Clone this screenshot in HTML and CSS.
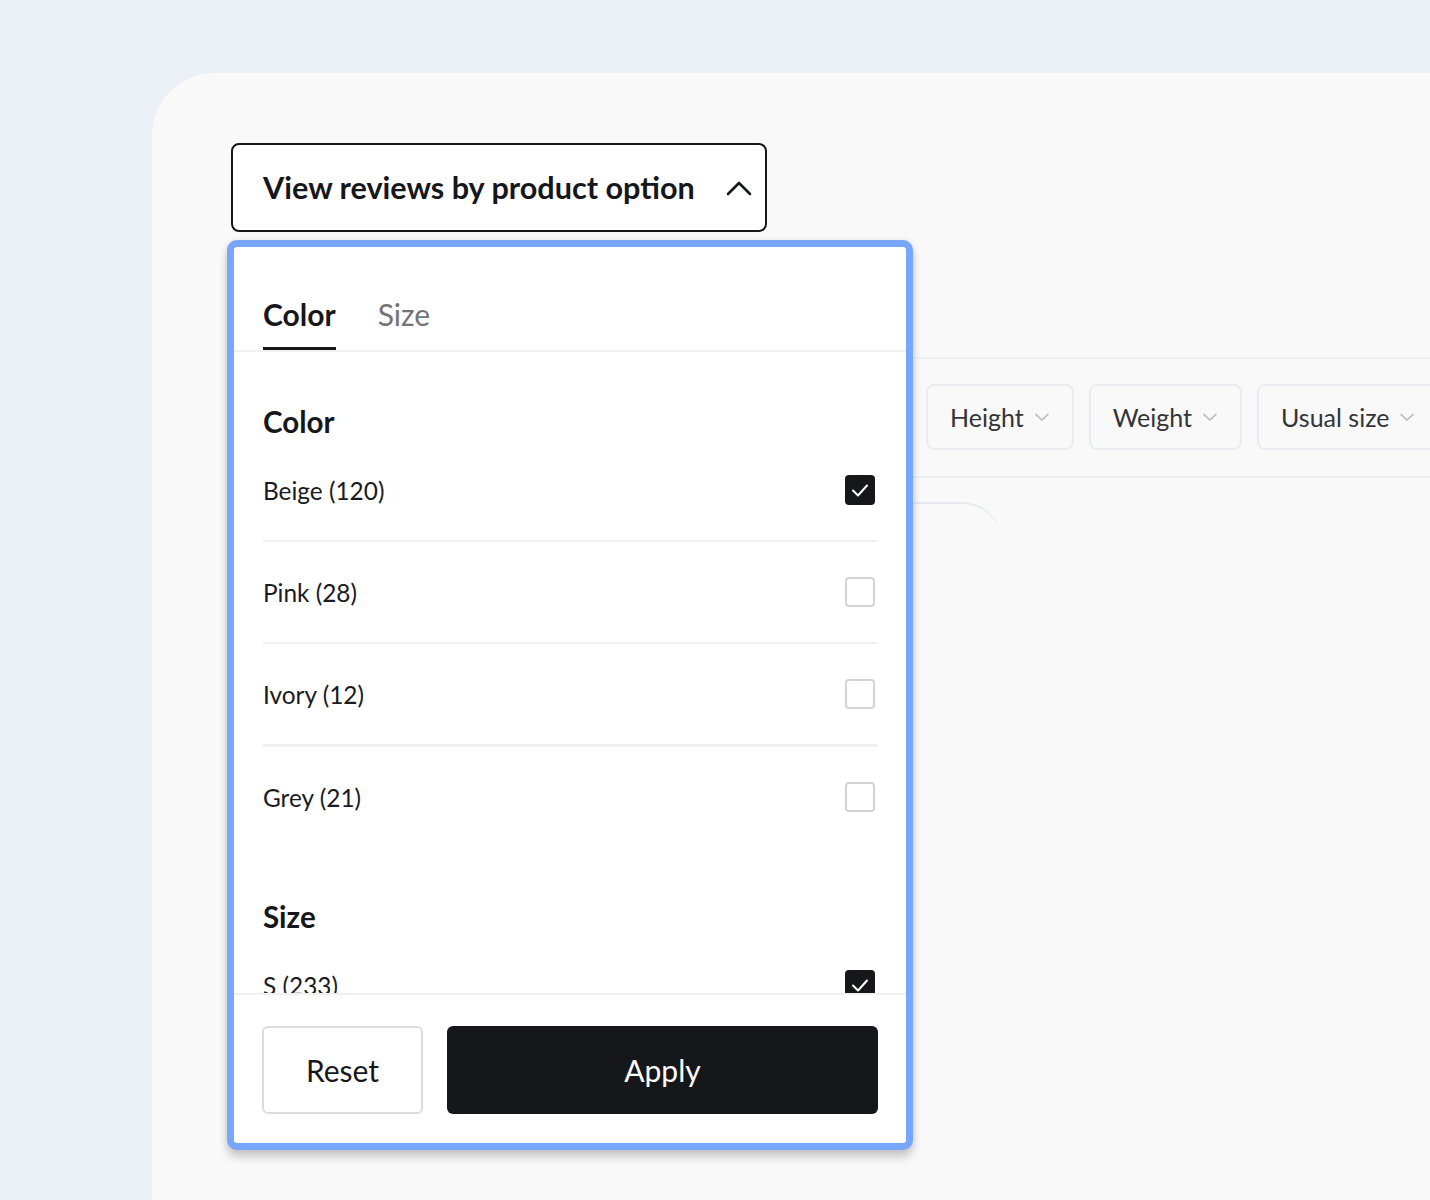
FILE: index.html
```html
<!DOCTYPE html>
<html lang="en">
<head>
<meta charset="utf-8">
<title>Reviews filter</title>
<link rel="stylesheet" href="styles.css">
</head>
<body>
<div class="card">
  <button class="trigger" type="button">
    <span class="trigger-label">View reviews by product option</span>
    <svg class="trigger-chevron" width="26" height="16" viewBox="0 0 26 16"><polyline points="2,14 13,3 24,14" fill="none" stroke="#16171b" stroke-width="2.6" stroke-linecap="round" stroke-linejoin="round"/></svg>
  </button>
  <div class="filters">
    <div class="chip">Height<svg class="chip-chevron" width="16" height="10" viewBox="0 0 16 10"><polyline points="1.5,2 8,8 14.5,2" fill="none" stroke="#b4b7bd" stroke-width="1.6"/></svg></div>
    <div class="chip">Weight<svg class="chip-chevron" width="16" height="10" viewBox="0 0 16 10"><polyline points="1.5,2 8,8 14.5,2" fill="none" stroke="#b4b7bd" stroke-width="1.6"/></svg></div>
    <div class="chip">Usual size<svg class="chip-chevron" width="16" height="10" viewBox="0 0 16 10"><polyline points="1.5,2 8,8 14.5,2" fill="none" stroke="#b4b7bd" stroke-width="1.6"/></svg></div>
  </div>
  <div class="review"></div>
</div>

<div class="panel">
  <div class="tabs">
    <div class="tab active">Color</div>
    <div class="tab">Size</div>
  </div>
  <div class="scroll">
    <div class="group">
      <div class="group-title">Color</div>
      <div class="row"><span>Beige (120)</span><span class="box checked"><svg width="30" height="30" viewBox="0 0 30 30"><polyline points="8,15.5 13,20.5 22,10.5" fill="none" stroke="#fff" stroke-width="2" stroke-linecap="round" stroke-linejoin="round"/></svg></span></div>
      <div class="row"><span>Pink (28)</span><span class="box"></span></div>
      <div class="row"><span>Ivory (12)</span><span class="box"></span></div>
      <div class="row"><span>Grey (21)</span><span class="box"></span></div>
    </div>
    <div class="group">
      <div class="group-title">Size</div>
      <div class="row"><span>S (233)</span><span class="box checked"><svg width="30" height="30" viewBox="0 0 30 30"><polyline points="8,15.5 13,20.5 22,10.5" fill="none" stroke="#fff" stroke-width="2" stroke-linecap="round" stroke-linejoin="round"/></svg></span></div>
    </div>
  </div>
  <div class="footer">
    <button class="btn btn-reset" type="button">Reset</button>
    <button class="btn btn-apply" type="button">Apply</button>
  </div>
</div>
</body>
</html>
```
FILE: styles.css
```css
html, body {
  margin: 0;
  padding: 0;
}
body {
  background: #ebeff6;
  font-family: Lato, "Liberation Sans", sans-serif;
  color: #16171b;
  height: 1200px;
  overflow: hidden;
  position: relative;
}
.card {
  margin: 73px 0 0 152px;
  background: #f9f9f9;
  border-top-left-radius: 62px;
  height: 1127px;
  padding: 70px 0 0 79px;
  box-sizing: border-box;
}
.trigger {
  width: 536px;
  height: 89px;
  box-sizing: border-box;
  border: 2px solid #16171b;
  border-radius: 8px;
  background: #fff;
  display: flex;
  align-items: center;
  justify-content: space-between;
  padding: 0 13px 0 30px;
  font-family: inherit;
  color: #16171b;
  cursor: pointer;
}
.trigger-label {
  font-size: 30.6px;
  font-weight: 700;
  line-height: 38px;
}
.trigger-chevron {
  display: block;
}
.filters {
  margin-top: 125px;
  border-top: 2px solid #eceff3;
  border-bottom: 2px solid #eceff3;
  padding: 25px 0 26px 695px;
  display: flex;
  gap: 15px;
}
.chip {
  height: 66px;
  box-sizing: border-box;
  border: 2px solid #e9edf2;
  border-radius: 8px;
  display: flex;
  align-items: center;
  gap: 10px;
  padding: 0 22px;
  font-size: 25px;
  color: #333438;
  white-space: nowrap;
}
.chip-chevron {
  display: block;
}
.review {
  margin-top: 24px;
  width: 771px;
  height: 300px;
  box-sizing: border-box;
  border-top: 2px solid #e6eaf0;
  border-top-right-radius: 40px;
}
.panel {
  position: absolute;
  left: 227px;
  top: 240px;
  width: 686px;
  height: 910px;
  box-sizing: border-box;
  border: 7px solid #77a6fc;
  border-radius: 10px;
  background: #fff;
  box-shadow: 0 7px 10px rgba(0, 0, 0, 0.2), 0 0 6px rgba(0, 0, 0, 0.08);
  display: flex;
  flex-direction: column;
}
.tabs {
  height: 105px;
  box-sizing: border-box;
  border-bottom: 2px solid #eef0f3;
  display: flex;
  align-items: flex-end;
  gap: 42px;
  padding: 0 29px;
  flex-shrink: 0;
}
.tab {
  font-size: 30px;
  line-height: 34px;
  padding-bottom: 16px;
  border-bottom: 3px solid transparent;
  color: #737478;
}
.tab.active {
  color: #16171b;
  font-weight: 700;
  border-bottom-color: #16171b;
}
.scroll {
  flex: 1;
  overflow: hidden;
  padding: 0 28px 0 29px;
}
.group {
  padding-top: 52px;
}
.group-title {
  font-size: 29.5px;
  font-weight: 700;
  line-height: 36px;
}
.row {
  height: 100px;
  display: flex;
  align-items: center;
  justify-content: space-between;
  border-bottom: 2px solid #eef0f3;
  font-size: 24.4px;
  color: #1a1b1f;
}
.row:nth-child(4) {
  border-bottom-width: 3px;
}
.row:last-child {
  border-bottom: none;
}
.box {
  width: 30px;
  height: 30px;
  box-sizing: border-box;
  border: 2px solid #d4d4d6;
  border-radius: 4px;
  margin-right: 3px;
  display: flex;
}
.box.checked {
  background: #16171b;
  border: none;
}
.box svg {
  display: block;
}
.footer {
  flex-shrink: 0;
  border-top: 2px solid #eef0f3;
  padding: 31px 28px 29px 28px;
  display: flex;
  gap: 24px;
}
.btn {
  height: 88px;
  border-radius: 6px;
  font-family: inherit;
  font-size: 30px;
  line-height: 36px;
  padding: 0;
  cursor: pointer;
}
.btn-reset {
  width: 161px;
  background: #fff;
  border: 2px solid #dcdcde;
  color: #16171b;
}
.btn-apply {
  flex: 1;
  background: #16171b;
  border: none;
  color: #fff;
}
```
